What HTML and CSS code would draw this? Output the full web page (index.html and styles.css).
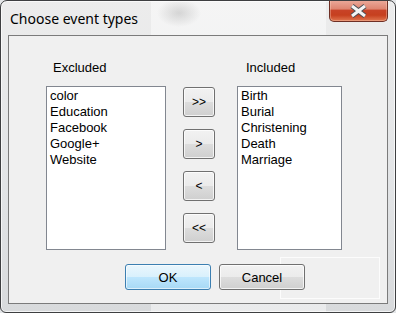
FILE: index.html
```html
<!DOCTYPE html>
<html lang="en">
<head>
    <meta charset="UTF-8">
    <title>Choose event types</title>
    <link rel="stylesheet" href="styles.css">
</head>
<body>

    <div class="window">
        <div class="titlebar">
            <span class="title">Choose event types</span>
            <button class="close" title="Close">
                <svg width="19" height="14" viewBox="0 0 19 14">
                    <path d="M3 2 L16 12 M16 2 L3 12" stroke="#4b4f55" stroke-width="5" fill="none"/>
                    <path d="M3 2 L16 12 M16 2 L3 12" stroke="#f4f4f4" stroke-width="3" fill="none"/>
                </svg>
            </button>
        </div>

        <div class="client">
            <div class="lists">
                <div class="col">
                    <div class="caption caption-excluded">Excluded</div>
                    <ul class="listbox listbox-excluded">
                        <li>color</li>
                        <li>Education</li>
                        <li>Facebook</li>
                        <li>Google+</li>
                        <li>Website</li>
                    </ul>
                </div>

                <div class="movers">
                    <button class="btn mover">&gt;&gt;</button>
                    <button class="btn mover">&gt;</button>
                    <button class="btn mover">&lt;</button>
                    <button class="btn mover">&lt;&lt;</button>
                </div>

                <div class="col col-included">
                    <div class="caption caption-included">Included</div>
                    <ul class="listbox listbox-included">
                        <li>Birth</li>
                        <li>Burial</li>
                        <li>Christening</li>
                        <li>Death</li>
                        <li>Marriage</li>
                    </ul>
                </div>
            </div>

            <div class="ghost"></div>

            <div class="actions">
                <button class="btn action btn-default">OK</button>
                <button class="btn action">Cancel</button>
            </div>
        </div>
    </div>

</body>
</html>
```

FILE: styles.css
```css
body {
    margin: 0;
    font-family: "Liberation Sans", Arial, sans-serif;
    background: #e4e6e8;
}

.window {
    width: 396px;
    height: 313px;
    box-sizing: border-box;
    display: flex;
    flex-direction: column;
    padding: 0 7px 8px 7px;
    border: 1px solid #3e3f41;
    border-radius: 7px 7px 6px 6px;
    box-shadow: inset 0 0 0 1px rgba(255, 255, 255, 0.7);
    background:
        radial-gradient(ellipse 22px 14px at 178px 12px, rgba(140, 140, 140, 0.3), transparent),
        linear-gradient(to right, transparent 150px, rgba(255, 255, 255, 0.45) 150px, rgba(255, 255, 255, 0.45) 325px, transparent 325px),
        linear-gradient(to bottom, #ececec, #e2e4e6 60%, #d8dadc);
    overflow: hidden;
}

.titlebar {
    height: 34px;
    display: flex;
    align-items: flex-start;
}

.title {
    font-family: "Noto Sans", sans-serif;
    font-size: 14px;
    line-height: 20px;
    color: #000;
    margin: 8px 0 0 2px;
}

.close {
    margin: -1px 0 0 auto;
    width: 59px;
    height: 22px;
    padding: 0;
    display: flex;
    align-items: center;
    justify-content: center;
    border: 1px solid #6e2f24;
    border-top: none;
    border-radius: 0 0 5px 5px;
    background: linear-gradient(to bottom, #ebab9c 0%, #de8571 42%, #c84327 50%, #c6401f 72%, #e0764f 100%);
    box-shadow: inset 0 0 0 1px rgba(255, 220, 200, 0.35);
}

.client {
    flex: 1;
    position: relative;
    background: #f0f0f0;
    border: 1px solid #7b7b7b;
}

.lists {
    display: flex;
    padding: 24px 0 0 37px;
}

.caption {
    font-size: 13px;
    line-height: 15px;
    color: #000;
    margin-bottom: 11px;
}

.caption-excluded {
    margin-left: 7px;
}

.caption-included {
    margin-left: 9px;
}

.listbox {
    box-sizing: border-box;
    height: 164px;
    margin: 0;
    padding: 1px 0 0 3px;
    list-style: none;
    background: #fff;
    border: 1px solid #828790;
    font-size: 13px;
    line-height: 16px;
    color: #000;
}

.listbox-excluded {
    width: 120px;
}

.listbox-included {
    width: 105px;
}

.movers {
    display: flex;
    flex-direction: column;
    gap: 12px;
    margin-left: 17px;
    padding-top: 27px;
}

.col-included {
    margin-left: 22px;
}

.btn {
    box-sizing: border-box;
    padding: 0;
    font-family: "Liberation Sans", Arial, sans-serif;
    color: #000;
    border: 1px solid #707070;
    border-radius: 3px;
    background: linear-gradient(to bottom, #f2f2f2 0%, #ebebeb 50%, #dddddd 50%, #cfcfcf 100%);
    box-shadow: inset 0 0 0 1px rgba(255, 255, 255, 0.75);
}

.mover {
    width: 32px;
    height: 30px;
    font-size: 12px;
}

.ghost {
    position: absolute;
    left: 271px;
    top: 221px;
    width: 100px;
    height: 42px;
    box-sizing: border-box;
    border: 1px solid rgba(255, 255, 255, 0.8);
}

.actions {
    position: relative;
    display: flex;
    gap: 8px;
    padding-left: 116px;
    margin-top: 14px;
}

.action {
    width: 86px;
    height: 26px;
    font-size: 13px;
}

.btn-default {
    border-color: #3c7fb1;
    background: linear-gradient(to bottom, #eaf6fd 0%, #d9f0fc 50%, #bee6fd 50%, #a7d9f5 100%);
    box-shadow: inset 0 0 0 1px rgba(255, 255, 255, 0.6), 0 0 0 0 transparent;
}
```
